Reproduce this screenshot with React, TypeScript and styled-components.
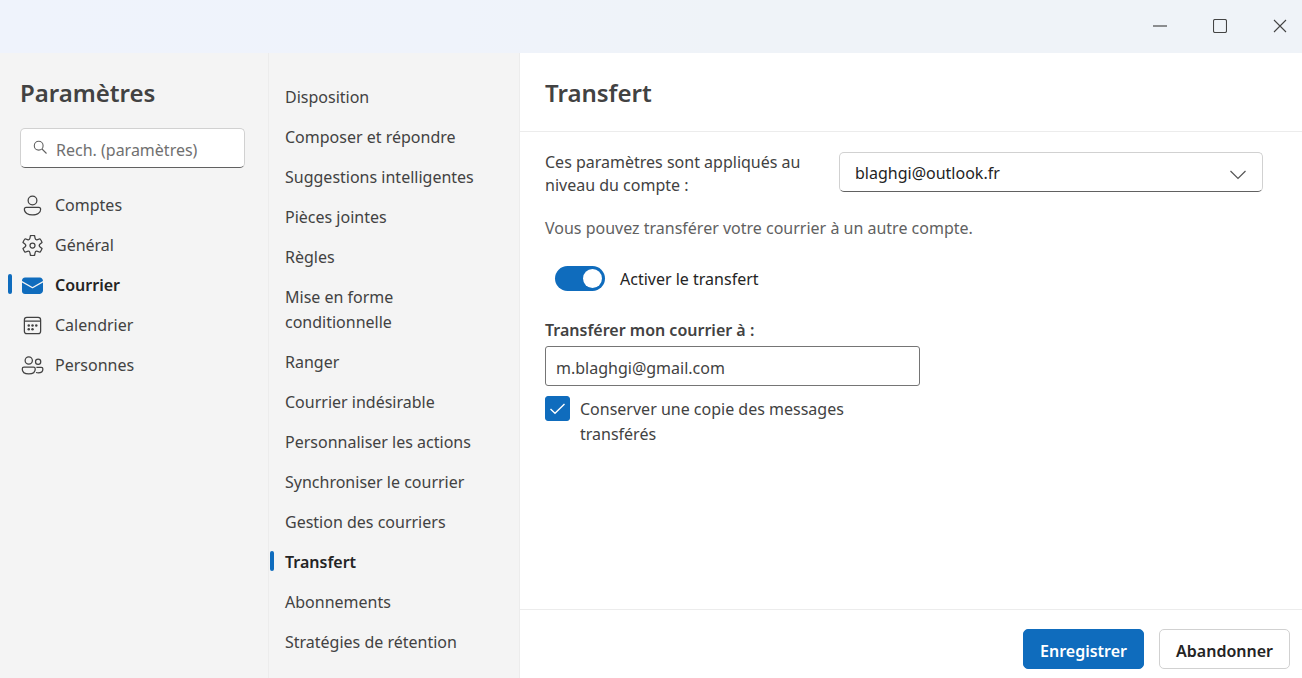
import React, { useState } from "react";
import styled, { createGlobalStyle } from "styled-components";

const GlobalStyle = createGlobalStyle`
  *, *::before, *::after { box-sizing: border-box; }
  body {
    margin: 0;
    font-family: "Noto Sans", "Open Sans", sans-serif;
    font-size: 16px;
    line-height: 25px;
    color: #424242;
    background: #fff;
  }
  button, input, select { font: inherit; color: inherit; }
  h1, h2, p, ul { margin: 0; padding: 0; }
  ul { list-style: none; }
  svg { display: block; flex: none; }
`;

const Window = styled.div`
  min-height: 100vh;
  display: flex;
  flex-direction: column;
`;

const TitleBar = styled.header`
  height: 53px;
  flex: none;
  display: flex;
  justify-content: flex-end;
  gap: 16px;
  padding-bottom: 1px;
  background: linear-gradient(90deg, #eff3fc 0%, #eff3fb 35%, #eff3f8 55%);
`;

const CaptionButton = styled.button`
  width: 44px;
  padding: 0;
  border: 0;
  background: none;
  display: flex;
  align-items: center;
  justify-content: center;
`;

const Panels = styled.div`
  flex: 1;
  display: grid;
  grid-template-columns: 269px 251px minmax(0, 1fr);
`;

const Column = styled.nav`
  background: #f4f4f4;
  border-right: 1px solid #ececec;
  padding-top: 24px;
`;

const Heading = styled.h1`
  font-size: 24px;
  font-weight: 600;
  line-height: 32px;
`;

const SearchBox = styled.label`
  margin: 19px 23px 17px 20px;
  height: 40px;
  display: flex;
  align-items: center;
  gap: 8px;
  padding: 0 12px;
  background: #fff;
  border: 1px solid #d1d1d1;
  border-bottom-color: #616161;
  border-radius: 5px;
  color: #616161;

  svg {
    margin-bottom: 2px;
  }
  input {
    flex: 1;
    min-width: 0;
    padding: 4px 0 0;
    border: 0;
    outline: 0;
    background: none;
  }
  input::placeholder {
    color: #707070;
    opacity: 1;
  }
`;

const CategoryHeader = styled.div`
  padding-left: 20px;
`;

const NavLink = styled.a<{ $active?: boolean; $inset: number }>`
  position: relative;
  display: flex;
  gap: 10px;
  min-height: 40px;
  padding: 8px 24px 7px ${(p) => p.$inset}px;
  color: ${(p) => (p.$active ? "#242424" : "#424242")};
  font-weight: ${(p) => (p.$active ? 600 : 400)};
  text-decoration: none;
`;

const ActiveMark = styled.span<{ $left: number }>`
  position: absolute;
  left: ${(p) => p.$left}px;
  top: 9px;
  width: 4px;
  height: 20px;
  border-radius: 2px;
  background: #0f6cbd;
`;

const Main = styled.main`
  display: flex;
  flex-direction: column;
`;

const MainHeader = styled.div`
  padding: 24px 25px 22px;
  border-bottom: 1px solid #ececec;
`;

const Body = styled.div`
  flex: 1;
  display: flex;
  flex-direction: column;
  align-items: flex-start;
  padding: 19px 39px 18px 25px;
`;

const AccountRow = styled.div`
  align-self: stretch;
  display: grid;
  grid-template-columns: 270px minmax(0, 1fr);
  column-gap: 24px;
  align-items: center;
  margin-bottom: 19px;
`;

const AccountLabel = styled.label`
  line-height: 23px;
`;

const SelectBox = styled.div`
  display: grid;
  align-items: center;
  margin-bottom: 4px;

  & > * {
    grid-area: 1 / 1;
  }
  svg {
    justify-self: end;
    margin: 6px 16px 0 0;
    pointer-events: none;
  }
`;

const Select = styled.select`
  appearance: none;
  width: 100%;
  height: 40px;
  padding: 2px 40px 0 15px;
  background: #fff;
  border: 1px solid #d1d1d1;
  border-bottom-color: #616161;
  border-radius: 5px;
  color: #242424;
`;

const Hint = styled.p`
  color: #616161;
`;

const SwitchRow = styled.label`
  display: flex;
  align-items: flex-start;
  gap: 15px;
  margin: 25px 0 0 10px;
  color: #242424;
`;

const OptionText = styled.span`
  padding-top: 1px;
`;

const Switch = styled.input`
  appearance: none;
  width: 50px;
  height: 25px;
  margin: 0;
  padding: 3px;
  border-radius: 13px;
  display: flex;
  justify-content: flex-start;
  background: #8a8a8a;

  &::before {
    content: "";
    width: 19px;
    height: 19px;
    border-radius: 50%;
    background: #fff;
  }
  &:checked {
    justify-content: flex-end;
    background: #0f6cbd;
  }
`;

const FieldLabel = styled.label`
  margin-top: 26px;
  font-weight: 600;
`;

const TextField = styled.input`
  width: 375px;
  max-width: 100%;
  height: 40px;
  margin: 3px 0 10px;
  padding: 4px 10px 0;
  border: 1px solid #757575;
  border-radius: 3px;
  background: #fff;
`;

const CheckRow = styled.label`
  display: flex;
  align-items: flex-start;
  gap: 10px;
  max-width: 340px;
`;

const CheckBox = styled.span`
  display: grid;
  flex: none;
  place-items: center;

  & > * {
    grid-area: 1 / 1;
  }
  input {
    appearance: none;
    width: 25px;
    height: 25px;
    margin: 0;
    border: 1px solid #616161;
    border-radius: 3px;
  }
  input:checked {
    border-color: #0f6cbd;
    background: #0f6cbd;
  }
  svg {
    pointer-events: none;
  }
`;

const Footer = styled.footer`
  display: flex;
  justify-content: flex-end;
  gap: 15px;
  padding: 19px 12px 9px;
  border-top: 1px solid #ececec;
`;

const Button = styled.button<{ $primary?: boolean }>`
  height: 40px;
  min-width: 120px;
  padding: 4px 16px 0;
  border: 1px solid ${(p) => (p.$primary ? "#0f6cbd" : "#d1d1d1")};
  border-radius: 5px;
  background: ${(p) => (p.$primary ? "#0f6cbd" : "#fff")};
  color: ${(p) => (p.$primary ? "#fff" : "#242424")};
  font-weight: 600;
`;

const icon = { width: 25, height: 25, viewBox: "0 0 20 20", fill: "currentColor", "aria-hidden": true } as const;
const line = { fill: "none", stroke: "currentColor", strokeWidth: 1 } as const;

const PersonIcon = () => (
  <svg {...icon}>
    <path d="M10 2a4 4 0 1 0 0 8 4 4 0 0 0 0-8ZM7 6a3 3 0 1 1 6 0 3 3 0 0 1-6 0Zm-2 5a2 2 0 0 0-2 2c0 1.7.83 2.97 2.13 3.8A9.14 9.14 0 0 0 10 18c1.85 0 3.58-.39 4.87-1.2A4.35 4.35 0 0 0 17 13a2 2 0 0 0-2-2H5Zm-1 2a1 1 0 0 1 1-1h10a1 1 0 0 1 1 1c0 1.3-.62 2.28-1.67 2.95A8.16 8.16 0 0 1 10 17a8.16 8.16 0 0 1-4.33-1.05A3.36 3.36 0 0 1 4 13Z" />
  </svg>
);

const GearIcon = () => (
  <svg {...icon}>
    <path d="M1.91 7.38A8.5 8.5 0 0 1 3.7 4.3a.5.5 0 0 1 .54-.13l1.92.68a1 1 0 0 0 1.32-.76l.36-2a.5.5 0 0 1 .4-.4 8.53 8.53 0 0 1 3.55 0c.2.04.35.2.38.4l.37 2a1 1 0 0 0 1.32.76l1.92-.68a.5.5 0 0 1 .54.13 8.5 8.5 0 0 1 1.78 3.08c.06.2 0 .4-.15.54l-1.56 1.32a1 1 0 0 0 0 1.52l1.56 1.32a.5.5 0 0 1 .15.54 8.5 8.5 0 0 1-1.78 3.08.5.5 0 0 1-.54.13l-1.92-.68a1 1 0 0 0-1.32.76l-.37 2a.5.5 0 0 1-.38.4 8.53 8.53 0 0 1-3.56 0 .5.5 0 0 1-.39-.4l-.36-2a1 1 0 0 0-1.32-.76l-1.92.68a.5.5 0 0 1-.54-.13 8.5 8.5 0 0 1-1.78-3.08.5.5 0 0 1 .15-.54l1.56-1.32a1 1 0 0 0 0-1.52L2.06 7.92a.5.5 0 0 1-.15-.54Zm1.06 0 1.3 1.1a2 2 0 0 1 0 3.04l-1.3 1.1c.3.79.72 1.51 1.25 2.16l1.6-.58a2 2 0 0 1 2.63 1.53l.3 1.67a7.56 7.56 0 0 0 2.5 0l.3-1.67a2 2 0 0 1 2.64-1.53l1.6.57a7.5 7.5 0 0 0 1.24-2.15l-1.3-1.1a2 2 0 0 1 0-3.04l1.3-1.1a7.5 7.5 0 0 0-1.25-2.16l-1.6.58a2 2 0 0 1-2.63-1.53l-.3-1.67a7.55 7.55 0 0 0-2.5 0l-.3 1.67A2 2 0 0 1 5.81 5.8l-1.6-.58a7.5 7.5 0 0 0-1.24 2.16ZM7.5 10a2.5 2.5 0 1 1 5 0 2.5 2.5 0 0 1-5 0ZM10 8.5a1.5 1.5 0 1 0 0 3 1.5 1.5 0 0 0 0-3Z" />
  </svg>
);

const MailIcon = () => (
  <svg {...icon} color="#0f6cbd">
    <path d="M18.4 7.57V14c0 1.4-1.1 2.7-2.5 2.7H4.1A2.5 2.5 0 0 1 1.6 14V7.57l8.15 4.56c.16.1.35.1.5 0l8.15-4.56ZM15.9 3.6c1.3 0 2.36.99 2.49 2.85L10 11.12 1.61 6.45A2.5 2.5 0 0 1 4.1 3.6h11.8Z" />
  </svg>
);

const CalendarIcon = () => (
  <svg {...icon}>
    <rect x="3.5" y="3.5" width="13" height="13" rx="2" {...line} />
    <path d="M3.5 6.5h13" {...line} />
    <circle cx="7" cy="10" r="1" />
    <circle cx="10" cy="10" r="1" />
    <circle cx="13" cy="10" r="1" />
    <circle cx="7" cy="13" r="1" />
    <circle cx="10" cy="13" r="1" />
  </svg>
);

const PeopleIcon = () => (
  <svg {...icon}>
    <circle cx="7" cy="6" r="2.9" {...line} />
    <circle cx="14.5" cy="7" r="2.1" {...line} />
    <path d="M3.2 11.3h7.6c.8 0 1.4.6 1.4 1.4 0 2.4-2.2 3.9-5.2 3.9s-5.2-1.5-5.2-3.9c0-.8.6-1.4 1.4-1.4Z" {...line} />
    <path d="M13.1 11.5h4c.7 0 1.2.5 1.2 1.2 0 1.9-1.5 3.1-3.8 3.1-.6 0-1.2-.1-1.7-.2" {...line} />
  </svg>
);

const categories = [
  { name: "Comptes", Icon: PersonIcon },
  { name: "Général", Icon: GearIcon },
  { name: "Courrier", Icon: MailIcon },
  { name: "Calendrier", Icon: CalendarIcon },
  { name: "Personnes", Icon: PeopleIcon },
];

const mailPages = [
  "Disposition",
  "Composer et répondre",
  "Suggestions intelligentes",
  "Pièces jointes",
  "Règles",
  "Mise en forme conditionnelle",
  "Ranger",
  "Courrier indésirable",
  "Personnaliser les actions",
  "Synchroniser le courrier",
  "Gestion des courriers",
  "Transfert",
  "Abonnements",
  "Stratégies de rétention",
];

export default function App() {
  const [forward, setForward] = useState(true);
  const [keepCopy, setKeepCopy] = useState(true);
  const [address, setAddress] = useState("m.blaghgi@gmail.com");

  return (
    <Window>
      <GlobalStyle />
      <TitleBar>
        <CaptionButton aria-label="Réduire">
          <svg width="14" height="14" viewBox="0 0 14 14">
            <path d="M0 7h14" stroke="#555" strokeWidth="1.3" />
          </svg>
        </CaptionButton>
        <CaptionButton aria-label="Agrandir">
          <svg width="14" height="14" viewBox="0 0 14 14">
            <rect x=".5" y=".5" width="13" height="13" rx="1.5" fill="none" stroke="#444" strokeWidth="1.1" />
          </svg>
        </CaptionButton>
        <CaptionButton aria-label="Fermer">
          <svg width="14" height="14" viewBox="0 0 14 14">
            <path d="M1 1l12 12M13 1L1 13" stroke="#444" strokeWidth="1.1" />
          </svg>
        </CaptionButton>
      </TitleBar>
      <Panels>
        <Column aria-label="Catégories">
          <CategoryHeader>
            <Heading>Paramètres</Heading>
          </CategoryHeader>
          <SearchBox>
            <svg width="15" height="15" viewBox="0 0 15 15" fill="none" stroke="currentColor" strokeWidth="1.1">
              <circle cx="5.7" cy="5.7" r="4.4" />
              <path d="M9 9l4.5 4.5" />
            </svg>
            <input type="search" aria-label="Rechercher" placeholder="Rech. (paramètres)" />
          </SearchBox>
          <ul>
            {categories.map(({ name, Icon }) => (
              <li key={name}>
                <NavLink href="#" $inset={20} $active={name === "Courrier"}>
                  {name === "Courrier" && <ActiveMark $left={8} />}
                  <Icon />
                  {name}
                </NavLink>
              </li>
            ))}
          </ul>
        </Column>
        <Column aria-label="Courrier">
          <ul>
            {mailPages.map((name) => (
              <li key={name}>
                <NavLink href="#" $inset={16} $active={name === "Transfert"}>
                  {name === "Transfert" && <ActiveMark $left={1} />}
                  {name}
                </NavLink>
              </li>
            ))}
          </ul>
        </Column>
        <Main>
          <MainHeader>
            <Heading as="h2">Transfert</Heading>
          </MainHeader>
          <Body>
            <AccountRow>
              <AccountLabel htmlFor="account">Ces paramètres sont appliqués au niveau du compte :</AccountLabel>
              <SelectBox>
                <Select id="account">
                  <option>blaghgi@outlook.fr</option>
                </Select>
                <svg width="18" height="18" viewBox="0 0 18 18" fill="none" stroke="#555" strokeWidth="1.2">
                  <path d="M1.5 5L9 12.5L16.5 5" />
                </svg>
              </SelectBox>
            </AccountRow>
            <Hint>Vous pouvez transférer votre courrier à un autre compte.</Hint>
            <SwitchRow>
              <Switch type="checkbox" role="switch" checked={forward} onChange={(e) => setForward(e.target.checked)} />
              <OptionText>Activer le transfert</OptionText>
            </SwitchRow>
            <FieldLabel htmlFor="address">Transférer mon courrier à :</FieldLabel>
            <TextField id="address" type="email" value={address} onChange={(e) => setAddress(e.target.value)} />
            <CheckRow>
              <CheckBox>
                <input type="checkbox" checked={keepCopy} onChange={(e) => setKeepCopy(e.target.checked)} />
                <svg width="17" height="17" viewBox="0 0 17 17" fill="none" stroke="#fff" strokeWidth="1.4">
                  <path d="M1.5 9L6 13.2L15.5 4" />
                </svg>
              </CheckBox>
              <OptionText>Conserver une copie des messages transférés</OptionText>
            </CheckRow>
          </Body>
          <Footer>
            <Button $primary>Enregistrer</Button>
            <Button>Abandonner</Button>
          </Footer>
        </Main>
      </Panels>
    </Window>
  );
}
